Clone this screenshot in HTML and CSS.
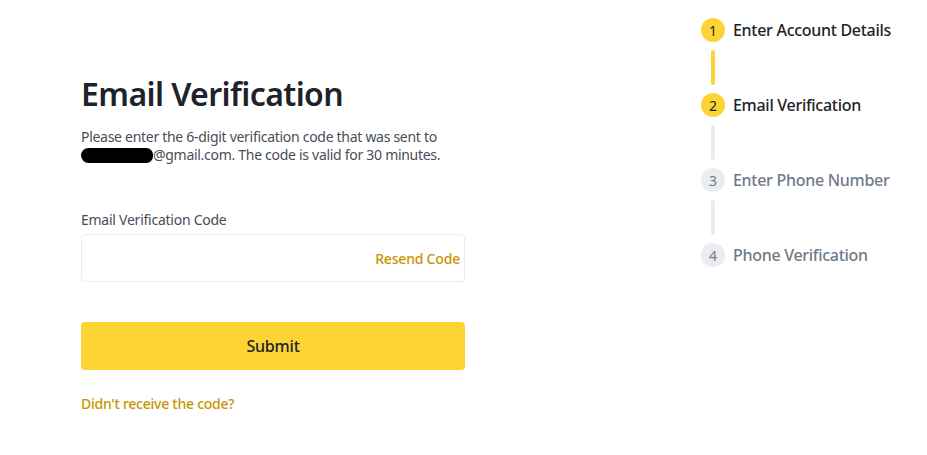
FILE: index.html
```html
<!DOCTYPE html>
<html lang="en">
<head>
<meta charset="utf-8">
<title>Email Verification</title>
<link rel="stylesheet" href="styles.css">
</head>
<body>
<div class="page">
  <main class="form">
    <h1 class="title">Email Verification</h1>
    <p class="desc">Please enter the 6-digit verification code that was sent to <span class="redact"></span>@gmail.com. The code is valid for 30 minutes.</p>
    <label class="label">Email Verification Code</label>
    <div class="input">
      <span class="resend">Resend Code</span>
    </div>
    <button class="submit">Submit</button>
    <a class="link">Didn't receive the code?</a>
  </main>
  <aside class="steps">
    <div class="step active"><span class="num">1</span><span class="name">Enter Account Details</span></div>
    <div class="line done"></div>
    <div class="step active"><span class="num">2</span><span class="name">Email Verification</span></div>
    <div class="line"></div>
    <div class="step"><span class="num">3</span><span class="name">Enter Phone Number</span></div>
    <div class="line"></div>
    <div class="step"><span class="num">4</span><span class="name">Phone Verification</span></div>
  </aside>
</div>
</body>
</html>
```
FILE: styles.css
```css
* { box-sizing: border-box; }
html, body { margin: 0; background: #fff; }
body { font-family: "Noto Sans", "Open Sans", sans-serif; color: #1E2329; }
.page {
  display: flex;
  padding: 18px 0 0 81px;
}
.form {
  width: 384px;
  display: flex;
  flex-direction: column;
  padding-top: 56px;
}
.title {
  margin: 0;
  font-size: 32px;
  line-height: 40px;
  font-weight: 600;
  letter-spacing: -0.6px;
  color: #1E2329;
}
.desc {
  margin: 14px 0 0;
  font-size: 14px;
  line-height: 18px;
  letter-spacing: -0.29px;
  color: #474D57;
}
.redact {
  display: inline-block;
  width: 72px;
  height: 15px;
  background: #000;
  border-radius: 8px 7px 7px 8px;
  vertical-align: -3px;
}
.label {
  margin-top: 46px;
  font-size: 14px;
  line-height: 20px;
  letter-spacing: -0.25px;
  color: #474D57;
}
.input {
  margin-top: 4px;
  height: 48px;
  border: 1px solid #EAECEF;
  border-radius: 4px;
  display: flex;
  align-items: center;
  justify-content: flex-end;
  padding-right: 4px;
}
.resend {
  font-size: 14px;
  font-weight: 500;
  letter-spacing: -0.2px;
  color: #C99400;
}
.submit {
  margin-top: 40px;
  height: 48px;
  border: 0;
  border-radius: 4px;
  background: #FCD535;
  font-family: inherit;
  font-size: 16px;
  font-weight: 500;
  letter-spacing: -0.2px;
  color: #1E2329;
}
.link {
  margin-top: 24px;
  font-size: 14px;
  font-weight: 500;
  letter-spacing: -0.25px;
  color: #C99400;
}
.steps {
  margin-left: 236px;
  display: flex;
  flex-direction: column;
}
.step {
  display: flex;
  align-items: center;
  height: 24px;
}
.num {
  width: 24px;
  height: 24px;
  border-radius: 50%;
  background: #EAECEF;
  color: #707A8A;
  font-size: 14px;
  display: flex;
  align-items: center;
  justify-content: center;
}
.name {
  margin-left: 8px;
  font-size: 16px;
  font-weight: 500;
  letter-spacing: -0.29px;
  color: #707A8A;
}
.step.active .num { background: #FCD535; color: #1E2329; }
.step.active .name { color: #1E2329; }
.line {
  width: 4px;
  height: 35px;
  margin: 8px 0 8px 10px;
  background: #EAECEF;
  border-radius: 2px;
}
.line.done { background: #FCD535; }
```
